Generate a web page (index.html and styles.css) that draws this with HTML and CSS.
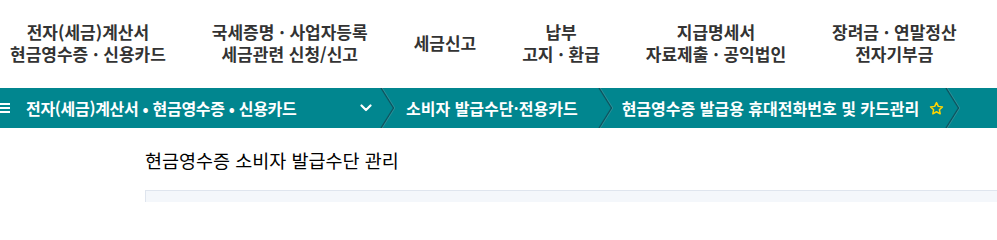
FILE: index.html
```html
<!DOCTYPE html>
<html lang="ko">
<head>
<meta charset="utf-8">
<title>현금영수증 소비자 발급수단 관리</title>
<link rel="stylesheet" href="styles.css">
</head>
<body>
<header class="gnb">
  <ul class="gnb-list">
    <li class="gnb-item"><span>전자(세금)계산서</span><span>현금영수증 · 신용카드</span></li>
    <li class="gnb-item"><span>국세증명 · 사업자등록</span><span>세금관련 신청/신고</span></li>
    <li class="gnb-item"><span>세금신고</span></li>
    <li class="gnb-item"><span>납부</span><span>고지 · 환급</span></li>
    <li class="gnb-item"><span>지급명세서</span><span>자료제출 · 공익법인</span></li>
    <li class="gnb-item"><span>장려금 · 연말정산</span><span>전자기부금</span></li>
  </ul>
</header>
<nav class="path">
  <div class="path-home">
    <span class="burger"><i></i><i></i><i></i></span>
    <span class="path-title">전자(세금)계산서 • 현금영수증 • 신용카드</span>
    <svg class="caret" width="12" height="8" viewBox="0 0 12 8"><polyline points="1.5,1.5 6,6 10.5,1.5" fill="none" stroke="#fff" stroke-width="2.2" stroke-linecap="round" stroke-linejoin="round"/></svg>
  </div>
  <svg class="sep" width="16" height="40" viewBox="0 0 16 40"><polyline points="1,0 13.5,20 1,40" fill="none" stroke="#0f5560" stroke-width="1.4"/><polyline points="2.3,0 14.8,20 2.3,40" fill="none" stroke="#3a8f98" stroke-width="0.8"/></svg>
  <div class="path-step step2">소비자 발급수단·전용카드</div>
  <svg class="sep" width="16" height="40" viewBox="0 0 16 40"><polyline points="1,0 13.5,20 1,40" fill="none" stroke="#0f5560" stroke-width="1.4"/><polyline points="2.3,0 14.8,20 2.3,40" fill="none" stroke="#3a8f98" stroke-width="0.8"/></svg>
  <div class="path-step step3">현금영수증 발급용 휴대전화번호 및 카드관리
    <svg class="star" width="15" height="15" viewBox="0 0 24 24"><polygon points="12,2.5 14.9,8.6 21.5,9.4 16.6,13.9 17.9,20.5 12,17.2 6.1,20.5 7.4,13.9 2.5,9.4 9.1,8.6" fill="none" stroke="#ffd400" stroke-width="2.4" stroke-linejoin="round"/></svg>
  </div>
  <svg class="sep sep-last" width="16" height="40" viewBox="0 0 16 40"><polyline points="1,0 13.5,20 1,40" fill="none" stroke="#0f5560" stroke-width="1.4"/><polyline points="2.3,0 14.8,20 2.3,40" fill="none" stroke="#3a8f98" stroke-width="0.8"/></svg>
</nav>
<main class="content">
  <h1 class="page-title">현금영수증 소비자 발급수단 관리</h1>
  <section class="panel"></section>
</main>
</body>
</html>
```
FILE: styles.css
```css
* { box-sizing: border-box; }
html, body { margin: 0; padding: 0; height: 202px; overflow: hidden; }
body {
  background: #fff;
  font-family: "Noto Sans CJK KR", "Noto Sans", sans-serif;
}
.gnb { height: 88px; }
.gnb-list {
  list-style: none;
  margin: 0;
  padding: 0 0 2px 10px;
  height: 86px;
  display: flex;
  align-items: center;
  gap: 46px;
}
.gnb-item {
  display: flex;
  flex-direction: column;
  align-items: center;
  gap: 1px;
  font-size: 17px;
  line-height: 21px;
  font-weight: 700;
  color: #333;
  white-space: nowrap;
}
.path {
  height: 40px;
  background: #01868f;
  display: flex;
  align-items: center;
  color: #fff;
  font-size: 16px;
  font-weight: 700;
  white-space: nowrap;
}
.path-home {
  width: 380px;
  display: flex;
  align-items: center;
  height: 100%;
}
.burger {
  width: 10px;
  display: flex;
  flex-direction: column;
  gap: 2px;
  margin-right: 16px;
}
.burger i { display: block; height: 2px; background: #fff; }
.path-title { flex: 1; letter-spacing: -0.3px; }
.caret { margin-right: 8px; }
.sep { flex: none; display: block; }
.sep-last { margin-left: 1px; }
.path-step { display: flex; align-items: center; height: 100%; }
.step2 { padding: 0 20px 0 10px; }
.step3 { padding: 0 0 0 8px; }
.star { margin-left: 10px; width: 15px; height: 15px; }
.content { padding-left: 145px; }
.page-title {
  margin: 20px 0 0;
  font-size: 18.5px;
  line-height: 24px;
  font-weight: 400;
  color: #000;
}
.panel {
  margin-top: 18px;
  height: 13px;
  background: #f4f7fb;
  border: 1px solid #dfe5ee;
  border-right: 0;
  border-bottom: 0;
}
```
